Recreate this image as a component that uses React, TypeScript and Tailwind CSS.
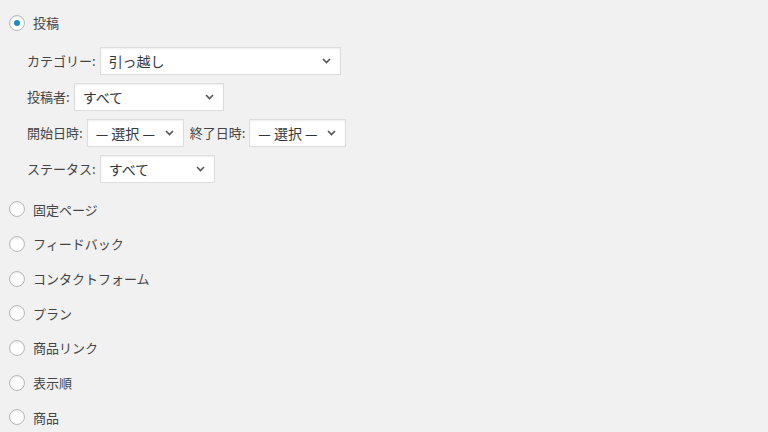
const font = "font-['Noto_Sans_CJK_JP','Noto_Sans',sans-serif]";

type SelectBoxProps = {
  value: string;
  width: string;
};

function SelectBox({ value, width }: SelectBoxProps) {
  return (
    <div
      className={`${width} h-[28px] flex items-center justify-between pl-[8px] pr-[9px] bg-white border border-[#dddddd] shadow-[inset_0_1px_2px_rgba(0,0,0,0.07)] text-[14px] text-[#32373c]`}
    >
      <span className="whitespace-nowrap">{value}</span>
      <svg width="9" height="6" viewBox="0 0 9 6" className="shrink-0">
        <path d="M1 1l3.5 3.5L8 1" fill="none" stroke="#555" strokeWidth="1.6" />
      </svg>
    </div>
  );
}

function Radio({ checked }: { checked?: boolean }) {
  return (
    <span className="w-[16px] h-[16px] rounded-full bg-white border border-[#b4b9be] shadow-[inset_0_1px_2px_rgba(0,0,0,0.1)] flex items-center justify-center shrink-0">
      {checked && <span className="w-[6px] h-[6px] rounded-full bg-[#1e8cbe]" />}
    </span>
  );
}

const postTypes = [
  "固定ページ",
  "フィードバック",
  "コンタクトフォーム",
  "プラン",
  "商品リンク",
  "表示順",
  "商品",
];

export default function App() {
  return (
    <div className={`w-[768px] h-[432px] overflow-hidden bg-[#f1f1f1] ${font} text-[13px] text-[#444]`}>
      <div className="pt-[6px] pl-[9px]">
        {/* 投稿 */}
        <div className="h-[34px] flex items-center gap-[8px]">
          <Radio checked />
          <span>投稿</span>
        </div>

        {/* filters */}
        <div className="mt-[3px] pl-[18px] flex flex-col">
          <div className="h-[36px] flex items-center gap-[4px]">
            <span>カテゴリー:</span>
            <SelectBox value="引っ越し" width="w-[241px]" />
          </div>
          <div className="h-[36px] flex items-center gap-[4px]">
            <span>投稿者:</span>
            <SelectBox value="すべて" width="w-[150px]" />
          </div>
          <div className="h-[36px] flex items-center gap-[4px]">
            <span>開始日時:</span>
            <SelectBox value="— 選択 —" width="w-[97px]" />
            <span className="ml-[2px]">終了日時:</span>
            <SelectBox value="— 選択 —" width="w-[97px]" />
          </div>
          <div className="h-[36px] flex items-center gap-[4px]">
            <span>ステータス:</span>
            <SelectBox value="すべて" width="w-[115px]" />
          </div>
        </div>

        {/* other post types */}
        <div className="mt-[5px] flex flex-col">
          {postTypes.map((t) => (
            <div key={t} className="h-[34.7px] flex items-center gap-[8px]">
              <Radio />
              <span>{t}</span>
            </div>
          ))}
        </div>
      </div>
    </div>
  );
}
